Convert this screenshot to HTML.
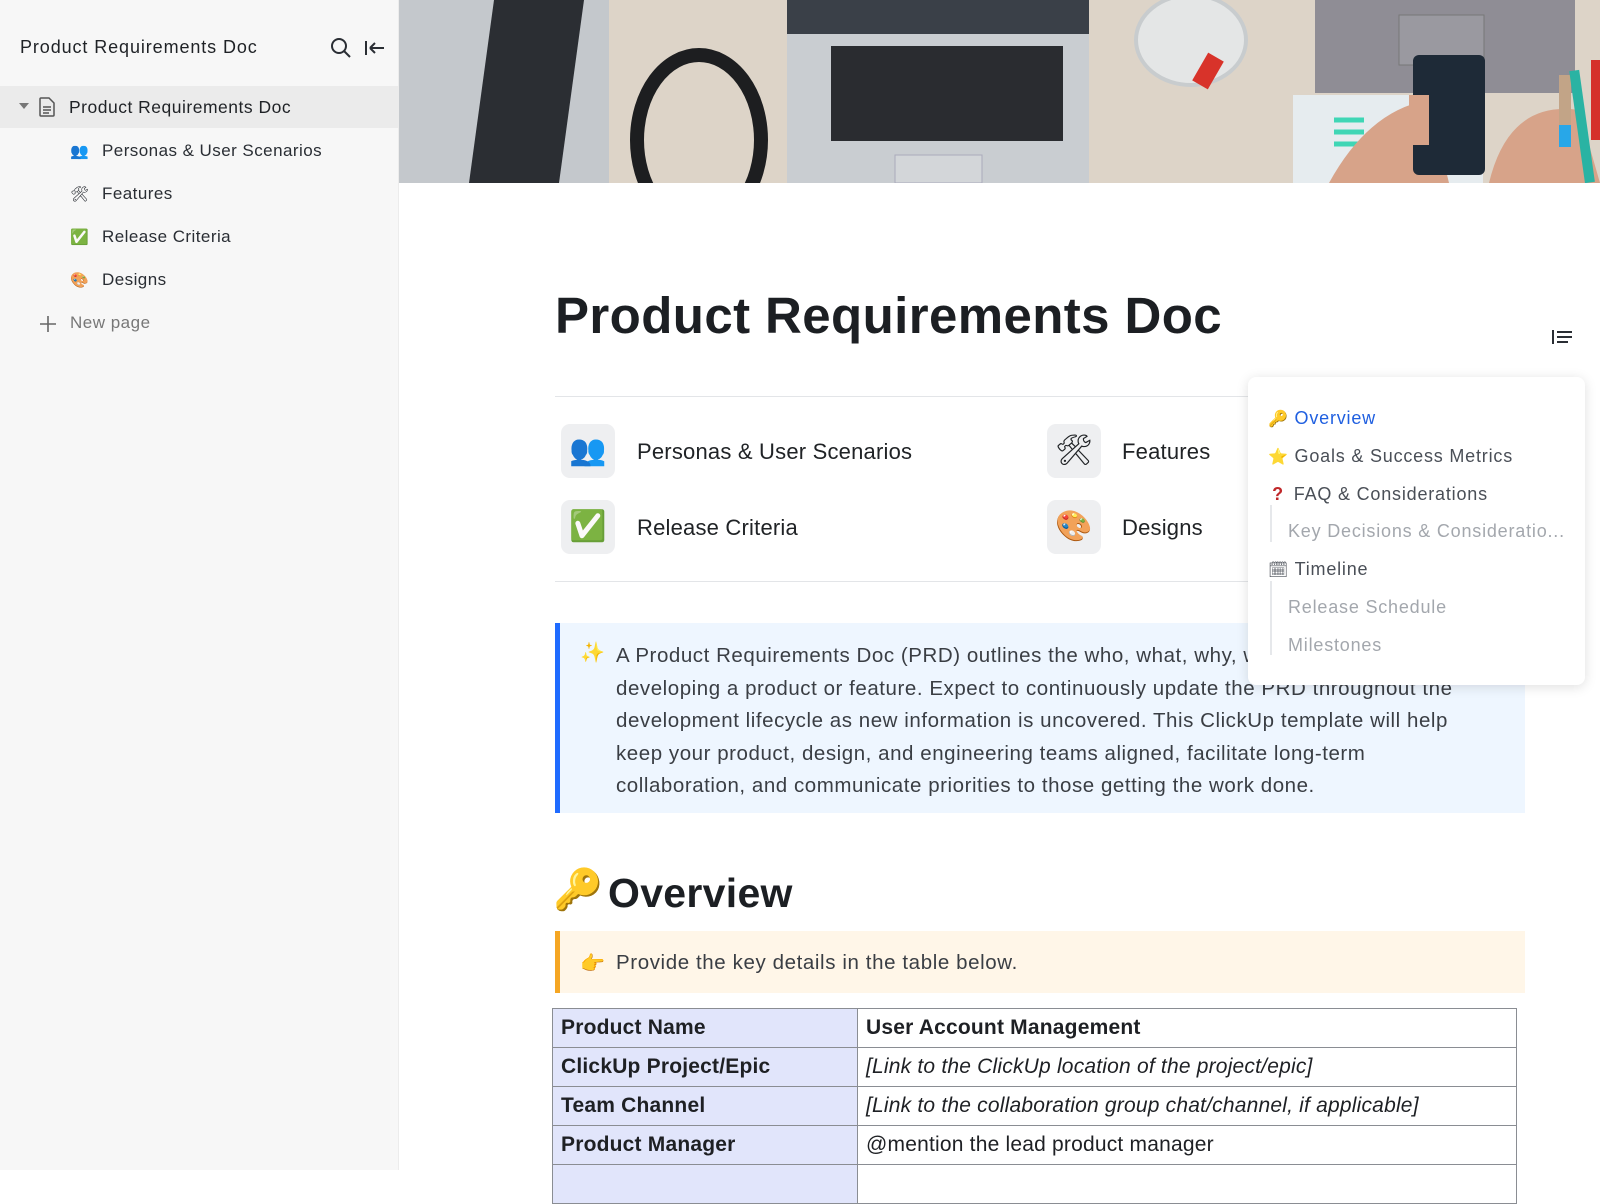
<!DOCTYPE html>
<html><head><meta charset="utf-8"><style>
*{box-sizing:border-box;margin:0;padding:0}
body{width:1600px;height:1170px;overflow:hidden;background:#fff;font-family:"Liberation Sans","Noto Sans CJK JP",sans-serif;color:#202326;position:relative}
.side{position:absolute;left:0;top:0;width:399px;height:1170px;background:#f7f7f7;border-right:1px solid #ececec}
.abs{position:absolute;white-space:nowrap}
.si{position:absolute;left:70px;font-size:17px;color:#2a2e34;letter-spacing:0.45px}
.si .e{display:inline-block;width:32px;font-size:15px;letter-spacing:0}
.card{position:absolute;width:54px;height:54px;border-radius:9px;background:#eeeff1;font-size:30px;text-align:center;line-height:54px}
.ct{position:absolute;font-size:22px;color:#202326;letter-spacing:0.2px}
.toc{position:absolute;left:1248px;top:377px;width:337px;height:308px;background:#fff;border-radius:8px;box-shadow:0 2px 12px rgba(0,0,0,.13)}
.ti{position:absolute;font-size:18px;color:#4a4f57;white-space:nowrap;letter-spacing:0.8px}
.tsub{color:#a3a7ad}
table{position:absolute;left:552px;top:1008px;width:965px;border-collapse:collapse;font-size:21px;letter-spacing:0.2px}
td{border:1.5px solid #8a8d93;height:39px;padding:0 8px;color:#1e2024}
td.h{background:#e1e5fb;font-weight:bold;width:305px}
</style></head><body>
<div class="side">
  <div class="abs" style="left:20px;top:37px;font-size:18px;color:#1f2226;letter-spacing:0.9px">Product Requirements Doc</div>
  <svg class="abs" style="left:330px;top:37px" width="22" height="22" viewBox="0 0 22 22"><circle cx="9" cy="9" r="7" fill="none" stroke="#2a2e34" stroke-width="2"/><path d="M14 14l6 6" stroke="#2a2e34" stroke-width="2"/></svg>
  <svg class="abs" style="left:364px;top:38px" width="22" height="20" viewBox="0 0 22 20"><path d="M2 3v14M6 10h14M6 10l5-5M6 10l5 5" fill="none" stroke="#2a2e34" stroke-width="2"/></svg>
  <div class="abs" style="left:0;top:86px;width:399px;height:42px;background:#ebebeb"></div>
  <div class="abs" style="left:19px;top:103px;width:0;height:0;border-left:5px solid transparent;border-right:5px solid transparent;border-top:6px solid #777"></div>
  <svg class="abs" style="left:39px;top:97px" width="16" height="20" viewBox="0 0 16 20"><path d="M2 1h8l5 5v12a1 1 0 0 1-1 1H2a1 1 0 0 1-1-1V2a1 1 0 0 1 1-1z" fill="none" stroke="#555" stroke-width="1.5"/><path d="M4 10h8M4 13h8M4 16h6" stroke="#555" stroke-width="1.4"/></svg>
  <div class="abs" style="left:69px;top:97px;font-size:17.5px;color:#1f2226;letter-spacing:0.5px">Product Requirements Doc</div>
  <div class="si" style="top:141px"><span class="e">👥</span>Personas &amp; User Scenarios</div>
  <div class="si" style="top:184px"><span class="e">🛠</span>Features</div>
  <div class="si" style="top:227px"><span class="e">✅</span>Release Criteria</div>
  <div class="si" style="top:270px"><span class="e">🎨</span>Designs</div>
  <svg class="abs" style="left:39px;top:315px" width="18" height="18"><path d="M9 1v16M1 9h16" stroke="#666" stroke-width="1.6"/></svg>
  <div class="abs" style="left:70px;top:313px;font-size:17px;color:#777;letter-spacing:0.5px">New page</div>
</div>

<svg class="abs" style="left:399px;top:0" width="1201" height="183" viewBox="0 0 1201 183">
  <rect width="1201" height="183" fill="#ddd4c8"/>
  <rect x="0" y="0" width="210" height="183" fill="#c4c8cc"/>
  <polygon points="95,0 185,0 160,183 70,183" fill="#2b2e33"/>
  <ellipse cx="300" cy="140" rx="62" ry="85" fill="none" stroke="#1d1e20" stroke-width="14"/>
  <rect x="388" y="0" width="302" height="183" fill="#c9cdd1"/>
  <rect x="388" y="0" width="302" height="34" fill="#3a4048"/>
  <rect x="432" y="46" width="232" height="95" fill="#2a2c30"/>
  <rect x="496" y="155" width="87" height="28" fill="#d3d6d9" stroke="#aab" />
  <ellipse cx="792" cy="40" rx="55" ry="45" fill="#e4e6e6" stroke="#c8ccce" stroke-width="4"/>
  <rect x="800" y="55" width="18" height="32" fill="#d8332a" transform="rotate(30 809 71)"/>
  <rect x="916" y="0" width="260" height="93" fill="#8f8d95"/>
  <rect x="1000" y="15" width="85" height="50" fill="#9a99a0" stroke="#777"/>
  <rect x="894" y="95" width="190" height="88" fill="#e6ecef"/>
  <path d="M935 120h30M935 132h30M935 144h25" stroke="#3fd6b5" stroke-width="5"/>
  <path d="M930 183 Q970 110 1030 100 L1050 183Z M1090 183 Q1110 100 1180 110 L1201 183Z" fill="#d7a389"/>
  <rect x="1014" y="55" width="72" height="120" rx="6" fill="#1e2a37"/>
  <rect x="1010" y="95" width="20" height="50" fill="#d7a389"/>
  <rect x="1160" y="75" width="12" height="70" fill="#c2a487"/>
  <rect x="1160" y="125" width="12" height="22" fill="#28a7e8"/>
  <rect x="1178" y="70" width="10" height="113" fill="#2ab3a3" transform="rotate(-8 1183 126)"/>
  <rect x="1192" y="60" width="9" height="80" fill="#d5312b"/>
</svg>

<div class="abs" style="left:555px;top:286px;font-size:51px;font-weight:bold;color:#1c1f23;letter-spacing:0.4px">Product Requirements Doc</div>
<svg class="abs" style="left:1552px;top:330px" width="22" height="14"><path d="M1 0v14" stroke="#2a2e34" stroke-width="2"/><path d="M5 2h15M5 7h15M5 12h11" stroke="#2a2e34" stroke-width="2"/></svg>

<div class="abs" style="left:555px;top:396px;width:970px;height:1px;background:#e3e5e8"></div>
<div class="card" style="left:561px;top:424px">👥</div><div class="ct" style="left:637px;top:439px">Personas &amp; User Scenarios</div>
<div class="card" style="left:1047px;top:424px">🛠</div><div class="ct" style="left:1122px;top:439px">Features</div>
<div class="card" style="left:561px;top:500px">✅</div><div class="ct" style="left:637px;top:515px">Release Criteria</div>
<div class="card" style="left:1047px;top:500px">🎨</div><div class="ct" style="left:1122px;top:515px">Designs</div>
<div class="abs" style="left:555px;top:581px;width:970px;height:1px;background:#e3e5e8"></div>

<div class="abs" style="left:555px;top:623px;width:970px;height:190px;background:#eef6ff;border-left:5px solid #1f6bff"></div>
<div class="abs" style="left:580px;top:640px;font-size:20px">✨</div>
<div class="abs" style="left:616px;top:640px;font-size:20.5px;line-height:32.5px;color:#3a3e44;letter-spacing:0.55px">A Product Requirements Doc (PRD) outlines the who, what, why, when, and how of<br>developing a product or feature. Expect to continuously update the PRD throughout the<br>development lifecycle as new information is uncovered. This ClickUp template will help<br>keep your product, design, and engineering teams aligned, facilitate long-term<br>collaboration, and communicate priorities to those getting the work done.</div>

<div class="abs" style="left:553px;top:866px;font-size:40px">🔑</div>
<div class="abs" style="left:608px;top:870px;font-size:41px;font-weight:bold;color:#1c1f23;letter-spacing:0.3px">Overview</div>

<div class="abs" style="left:555px;top:931px;width:970px;height:62px;background:#fff6e8;border-left:5px solid #f5a623"></div>
<div class="abs" style="left:580px;top:951px;font-size:20px">👉</div>
<div class="abs" style="left:616px;top:951px;font-size:20.5px;color:#3a3e44;letter-spacing:0.6px">Provide the key details in the table below.</div>

<table>
<tr><td class="h">Product Name</td><td style="font-weight:bold">User Account Management</td></tr>
<tr><td class="h">ClickUp Project/Epic</td><td style="font-style:italic">[Link to the ClickUp location of the project/epic]</td></tr>
<tr><td class="h">Team Channel</td><td style="font-style:italic">[Link to the collaboration group chat/channel, if applicable]</td></tr>
<tr><td class="h">Product Manager</td><td>@mention the lead product manager</td></tr>
<tr><td class="h">&nbsp;</td><td>&nbsp;</td></tr>
</table>

<div class="toc">
  <div class="ti" style="left:20px;top:31px"><span style="font-size:16px">🔑</span> <span style="color:#1f5fe0">Overview</span></div>
  <div class="ti" style="left:20px;top:69px"><span style="font-size:16px">⭐</span> Goals &amp; Success Metrics</div>
  <div class="ti" style="left:20px;top:107px"><span style="color:#c0282a;font-weight:bold;display:inline-block;width:20px;text-align:center">?</span> FAQ &amp; Considerations</div>
  <div class="abs" style="left:22px;top:128px;width:2px;height:37px;background:#e6e8eb"></div>
  <div class="ti tsub" style="left:40px;top:144px">Key Decisions &amp; Consideratio...</div>
  <div class="ti" style="left:20px;top:182px"><span style="font-size:16px">🗓</span> Timeline</div>
  <div class="abs" style="left:22px;top:204px;width:2px;height:74px;background:#e6e8eb"></div>
  <div class="ti tsub" style="left:40px;top:220px">Release Schedule</div>
  <div class="ti tsub" style="left:40px;top:258px">Milestones</div>
</div>
</body></html>
